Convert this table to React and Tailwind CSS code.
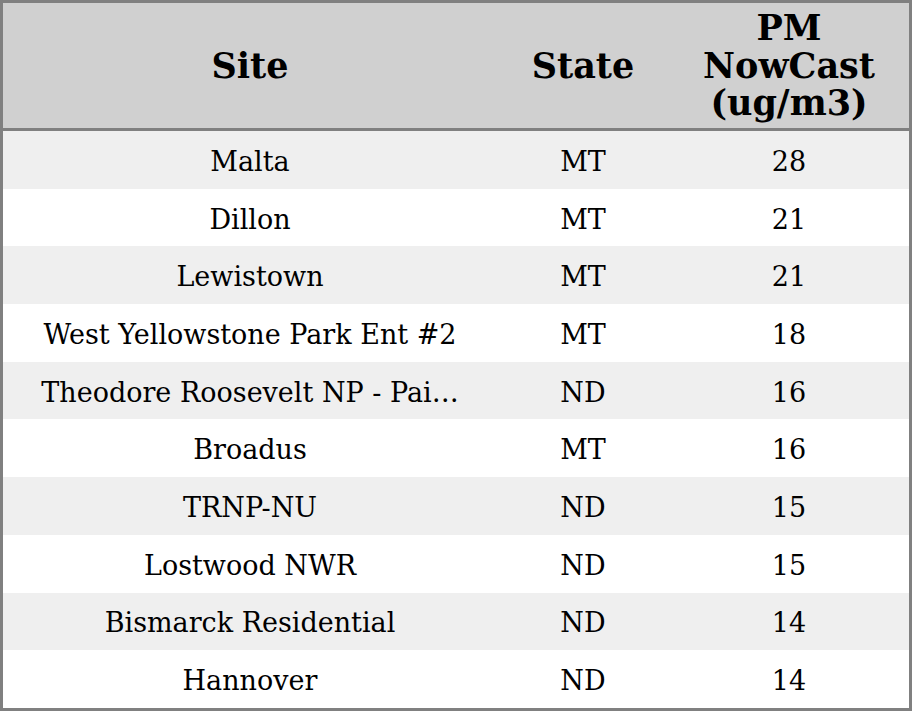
import React from "react";

const rows = [
  ["Malta", "MT", "28"],
  ["Dillon", "MT", "21"],
  ["Lewistown", "MT", "21"],
  ["West Yellowstone Park Ent #2", "MT", "18"],
  ["Theodore Roosevelt NP - Pai…", "ND", "16"],
  ["Broadus", "MT", "16"],
  ["TRNP-NU", "ND", "15"],
  ["Lostwood NWR", "ND", "15"],
  ["Bismarck Residential", "ND", "14"],
  ["Hannover", "ND", "14"],
];

export default function App() {
  return (
    <div
      className="w-[912px] h-[711px] overflow-hidden bg-white border-[3px] border-[#808080] text-black"
      style={{ fontFamily: '"DejaVu Serif", serif' }}
    >
      <div className="flex h-[125px] bg-[#d0d0d0] border-b-[3px] border-[#808080] box-content font-bold text-[35px] leading-[37.5px]">
        <div className="w-[494px] flex items-center justify-center text-center">Site</div>
        <div className="w-[172px] flex items-center justify-center text-center">State</div>
        <div className="flex-1 flex items-center justify-center text-center">
          PM<br />NowCast<br />(ug/m3)
        </div>
      </div>
      {rows.map((r, i) => (
        <div
          key={i}
          className={`flex h-[57.7px] items-center pt-[4px] text-[27px] leading-[32px] ${i % 2 === 0 ? "bg-[#efefef]" : "bg-white"}`}
        >
          <div className="w-[494px] text-center whitespace-nowrap">{r[0]}</div>
          <div className="w-[172px] text-center">{r[1]}</div>
          <div className="flex-1 text-center">{r[2]}</div>
        </div>
      ))}
    </div>
  );
}
